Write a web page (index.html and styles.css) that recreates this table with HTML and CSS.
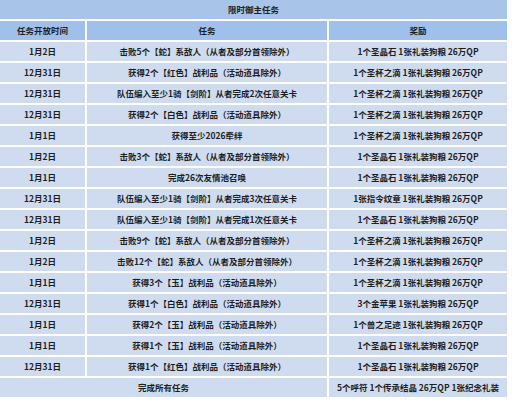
FILE: index.html
```html
<!DOCTYPE html>
<html lang="zh-CN">
<head>
<meta charset="utf-8">
<link rel="stylesheet" href="styles.css">
<title>限时御主任务</title>
</head>
<body>
<div class="table">
  <div class="cell title">限时御主任务</div>
  <div class="cell head">任务开放时间</div>
  <div class="cell head">任务</div>
  <div class="cell head">奖励</div>

  <div class="cell">1月2日</div><div class="cell">击败5个【蛇】系敌人（从者及部分首领除外）</div><div class="cell">1个圣晶石 1张礼装狗粮 26万QP</div>
  <div class="cell">12月31日</div><div class="cell">获得2个【红色】战利品（活动道具除外）</div><div class="cell">1个圣杯之滴 1张礼装狗粮 26万QP</div>
  <div class="cell">12月31日</div><div class="cell">队伍编入至少1骑【剑阶】从者完成2次任意关卡</div><div class="cell">1个圣杯之滴 1张礼装狗粮 26万QP</div>
  <div class="cell">12月31日</div><div class="cell">获得2个【白色】战利品（活动道具除外）</div><div class="cell">1个圣杯之滴 1张礼装狗粮 26万QP</div>
  <div class="cell">1月1日</div><div class="cell">获得至少2026牵绊</div><div class="cell">1个圣杯之滴 1张礼装狗粮 26万QP</div>
  <div class="cell">1月2日</div><div class="cell">击败3个【蛇】系敌人（从者及部分首领除外）</div><div class="cell">1个圣晶石 1张礼装狗粮 26万QP</div>
  <div class="cell">1月1日</div><div class="cell">完成26次友情池召唤</div><div class="cell">1个圣晶石 1张礼装狗粮 26万QP</div>
  <div class="cell">12月31日</div><div class="cell">队伍编入至少1骑【剑阶】从者完成3次任意关卡</div><div class="cell">1张指令纹章 1张礼装狗粮 26万QP</div>
  <div class="cell">12月31日</div><div class="cell">队伍编入至少1骑【剑阶】从者完成1次任意关卡</div><div class="cell">1个圣晶石 1张礼装狗粮 26万QP</div>
  <div class="cell">1月2日</div><div class="cell">击败9个【蛇】系敌人（从者及部分首领除外）</div><div class="cell">1个圣杯之滴 1张礼装狗粮 26万QP</div>
  <div class="cell">1月2日</div><div class="cell">击败12个【蛇】系敌人（从者及部分首领除外）</div><div class="cell">1个圣杯之滴 1张礼装狗粮 26万QP</div>
  <div class="cell">1月1日</div><div class="cell">获得3个【玉】战利品（活动道具除外）</div><div class="cell">1个圣杯之滴 1张礼装狗粮 26万QP</div>
  <div class="cell">12月31日</div><div class="cell">获得1个【白色】战利品（活动道具除外）</div><div class="cell">3个金苹果 1张礼装狗粮 26万QP</div>
  <div class="cell">1月1日</div><div class="cell">获得2个【玉】战利品（活动道具除外）</div><div class="cell">1个兽之足迹 1张礼装狗粮 26万QP</div>
  <div class="cell">1月1日</div><div class="cell">获得1个【玉】战利品（活动道具除外）</div><div class="cell">1个圣晶石 1张礼装狗粮 26万QP</div>
  <div class="cell">12月31日</div><div class="cell">获得1个【红色】战利品（活动道具除外）</div><div class="cell">1个圣晶石 1张礼装狗粮 26万QP</div>
  <div class="cell span2">完成所有任务</div><div class="cell">5个呼符 1个传承结晶 26万QP 1张纪念礼装</div>
</div>
</body>
</html>
```

FILE: styles.css
```css
html, body {
  margin: 0;
  padding: 0;
  background: #ffffff;
}

.table {
  display: grid;
  grid-template-columns: 85px 240px 178px;
  grid-auto-rows: 19px;
  gap: 2px;
  width: 507px;
  font-family: "Noto Sans CJK SC", "Noto Sans", sans-serif;
  font-size: 8.5px;
  font-weight: 700;
  color: #1e1e1e;
}

.cell {
  display: flex;
  align-items: center;
  justify-content: center;
  background: #cfdcef;
  white-space: nowrap;
  overflow: hidden;
  line-height: 1;
}

.title {
  grid-column: 1 / -1;
  background: #a8c4e8;
}

.head {
  background: #9ec0ea;
}

.span2 {
  grid-column: span 2;
}
```
